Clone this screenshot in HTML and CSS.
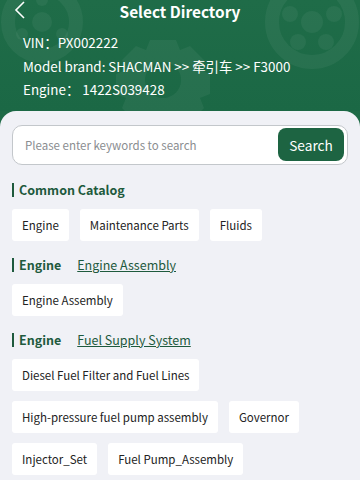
FILE: index.html
```html
<!DOCTYPE html>
<html>
<head>
  <title>Select Directory</title>
  <link rel="stylesheet" href="styles.css">
</head>
<body>
  <div class="top">
    <svg class="deco" width="360" height="120" viewBox="0 0 360 120">
      <g fill="none" stroke="#ffffff" stroke-opacity="0.05" stroke-width="14">
        <circle cx="42" cy="22" r="34"/>
        <circle cx="312" cy="22" r="40"/>
      </g>
      <g fill="#ffffff" fill-opacity="0.05">
        <circle cx="42" cy="22" r="10"/>
        <circle cx="42" cy="0" r="6"/>
        <circle cx="62" cy="34" r="6"/>
        <circle cx="22" cy="34" r="6"/>
        <circle cx="312" cy="22" r="11"/>
        <circle cx="290" cy="14" r="8"/>
        <circle cx="334" cy="14" r="8"/>
        <circle cx="298" cy="42" r="8"/>
        <circle cx="326" cy="42" r="8"/>
        <path d="M150 40 h26 l4 10 l10 -4 l14 14 l-4 10 l10 4 v20 l-10 4 l4 10 l-14 14 l-10 -4 l-4 10 h-26 l-4 -10 l-10 4 l-14 -14 l4 -10 l-10 -4 v-20 l10 -4 l-4 -10 l14 -14 l10 4 z M163 62 a18 18 0 1 0 0.1 0 z"/>
      </g>
    </svg>
    <div class="nav">
      <svg class="back" width="12" height="18" viewBox="0 0 12 18">
        <path d="M10 1 L2 9 L10 17" fill="none" stroke="#fff" stroke-width="1.6"/>
      </svg>
      <span class="title">Select Directory</span>
    </div>
    <div class="info">
      <div>VIN：PX002222</div>
      <div>Model brand: SHACMAN &gt;&gt; 牵引车 &gt;&gt; F3000</div>
      <div>Engine：&nbsp;1422S039428</div>
    </div>
  </div>

  <div class="panel">
    <div class="search">
      <input type="text" class="search-input" placeholder="Please enter keywords to search">
      <button class="search-btn">Search</button>
    </div>

    <div class="heading"><span class="bar"></span><b>Common Catalog</b></div>
    <div class="chips">
      <span class="chip">Engine</span>
      <span class="chip">Maintenance Parts</span>
      <span class="chip">Fluids</span>
    </div>

    <div class="heading"><span class="bar"></span><b>Engine</b><a class="sub" href="#">Engine Assembly</a></div>
    <div class="chips">
      <span class="chip">Engine Assembly</span>
    </div>

    <div class="heading"><span class="bar"></span><b>Engine</b><a class="sub" href="#">Fuel Supply System</a></div>
    <div class="chips">
      <span class="chip">Diesel Fuel Filter and Fuel Lines</span>
      <span class="chip">High-pressure fuel pump assembly</span>
      <span class="chip">Governor</span>
      <span class="chip">Injector_Set</span>
      <span class="chip">Fuel Pump_Assembly</span>
    </div>
  </div>
</body>
</html>
```

FILE: styles.css
```css
body {
  margin: 0;
  font-family: "Noto Sans CJK SC", "Noto Sans", sans-serif;
  background-color: #1e6a46;
  color: #333;
  overflow: hidden;
  height: 480px;
}

.top {
  position: relative;
  background: linear-gradient(180deg, #1f6c48 0%, #1b6845 100%);
  color: #fff;
  padding-bottom: 9px;
}

.deco {
  position: absolute;
  top: 0;
  left: 0;
}

.nav {
  position: relative;
  height: 22px;
  display: flex;
  align-items: center;
  justify-content: center;
}

.back {
  position: absolute;
  left: 14px;
  top: 1px;
}

.title {
  font-size: 15.4px;
  font-weight: bold;
  line-height: 22px;
}

.info {
  position: relative;
  padding: 9px 23px 0;
  font-size: 13.4px;
  line-height: 23.5px;
}

.panel {
  background-color: #f0f1f6;
  border-radius: 16px 16px 0 0;
  padding: 14px 12px 20px;
  height: 400px;
}

.search {
  display: flex;
  align-items: center;
  height: 40px;
  box-sizing: border-box;
  background-color: #fff;
  border: 1px solid #c3c7cb;
  border-radius: 10px;
  padding: 0 3px 0 12px;
}

.search-input {
  flex: 1;
  border: none;
  outline: none;
  background: transparent;
  font-family: inherit;
  font-size: 11.5px;
  color: #333;
  padding: 0;
}

.search-input::placeholder {
  color: #8a8d90;
}

.search-btn {
  width: 66px;
  height: 33px;
  border: none;
  border-radius: 8px;
  background-color: #1d6442;
  color: #fff;
  font-family: inherit;
  font-size: 13.7px;
  padding: 0;
}

.heading {
  display: flex;
  align-items: center;
  height: 20px;
  margin-top: 15px;
  color: #1e5a3d;
  font-size: 12.5px;
}

.chips + .heading {
  margin-top: 14px;
}

.bar {
  width: 2px;
  height: 14px;
  background-color: #1e5a3d;
  margin-right: 5px;
}

.sub {
  margin-left: 16px;
  color: #1e5a3d;
  text-decoration: underline;
}

.chips {
  display: flex;
  flex-wrap: wrap;
  gap: 10px 11px;
  margin-top: 9px;
}

.chip {
  height: 32px;
  line-height: 32px;
  padding: 0 10px;
  background-color: #fff;
  border-radius: 3px;
  font-size: 11.5px;
  color: #222;
}
```
